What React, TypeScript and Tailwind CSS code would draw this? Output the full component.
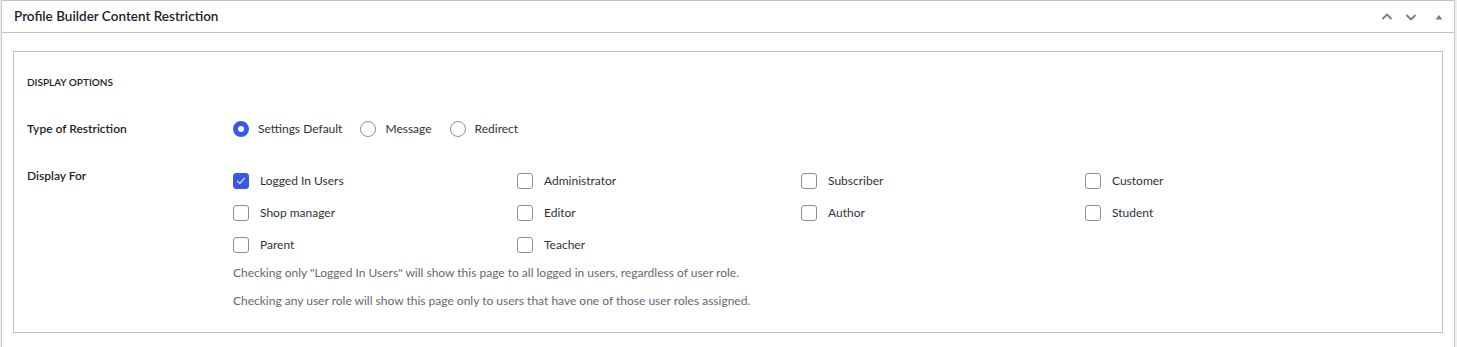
const roles: { name: string; checked?: boolean }[] = [
  { name: "Logged In Users", checked: true },
  { name: "Administrator" },
  { name: "Subscriber" },
  { name: "Customer" },
  { name: "Shop manager" },
  { name: "Editor" },
  { name: "Author" },
  { name: "Student" },
  { name: "Parent" },
  { name: "Teacher" },
];

const radios = [
  { name: "Settings Default", checked: true },
  { name: "Message" },
  { name: "Redirect" },
];

function Checkbox({ checked }: { checked?: boolean }) {
  if (checked) {
    return (
      <span className="w-4 h-4 rounded-[3px] bg-[#3858e9] border border-[#3858e9] flex items-center justify-center shrink-0">
        <svg width="12" height="12" viewBox="0 0 12 12" fill="none">
          <path d="M2.5 6.3 L4.8 8.5 L9.3 3.2" stroke="#c9d2fb" strokeWidth="1.4" strokeLinecap="round" strokeLinejoin="round" />
        </svg>
      </span>
    );
  }
  return <span className="w-4 h-4 rounded-[3px] border border-[#8c8f94] bg-white shrink-0" />;
}

function Radio({ checked }: { checked?: boolean }) {
  if (checked) {
    return <span className="w-4 h-4 rounded-full border-[5px] border-[#3858e9] bg-white shrink-0" />;
  }
  return <span className="w-4 h-4 rounded-full border border-[#8c8f94] bg-white shrink-0" />;
}

export default function App() {
  return (
    <div className="bg-[#f0f0f1] min-h-[347px] pl-px font-['Lato','Noto_Sans',sans-serif] text-[#2c3338]">
      <div className="w-[1454px] bg-white border border-b-0 border-[#c3c4c7] min-h-[347px]">
        <div className="h-[32px] flex items-center justify-between border-b border-[#c3c4c7] pl-3 pr-[9px]">
          <div className="text-[13.5px] font-semibold text-[#1d2327]">Profile Builder Content Restriction</div>
          <div className="flex items-center gap-[12px] text-[#787c82]">
            <svg width="12" height="12" viewBox="0 0 12 12" fill="none">
              <path d="M1.5 8 L6 3.5 L10.5 8" stroke="#787c82" strokeWidth="1.8" />
            </svg>
            <svg width="12" height="12" viewBox="0 0 12 12" fill="none">
              <path d="M1.5 4 L6 8.5 L10.5 4" stroke="#787c82" strokeWidth="1.8" />
            </svg>
            <svg width="12" height="12" viewBox="0 0 12 12" className="ml-[4px]">
              <path d="M2.5 8.5 L6 4 L9.5 8.5 Z" fill="#787c82" />
            </svg>
          </div>
        </div>
        <div className="pt-[18px] px-[11px] pb-[14px]">
          <div className="border border-[#c3c4c7] pl-[13px] pt-[20px] pb-[21px]">
            <div className="h-[20px] flex items-center text-[10px] font-semibold uppercase text-[#1d2327]">
              Display Options
            </div>
            <div className="mt-[27px] flex items-center h-[20px]">
              <div className="w-[206px] text-[12px] font-semibold text-[#1d2327]">Type of Restriction</div>
              <div className="flex items-center text-[12px]">
                {radios.map((r) => (
                  <label key={r.name} className="flex items-center gap-[9px] mr-[18px]">
                    <Radio checked={r.checked} />
                    <span>{r.name}</span>
                  </label>
                ))}
              </div>
            </div>
            <div className="mt-[27px] flex">
              <div className="w-[206px] h-[20px] flex items-center text-[12px] font-semibold text-[#1d2327]">Display For</div>
              <div>
                <div className="grid grid-cols-[284px_284px_284px_284px] gap-y-[2px]">
                  {roles.map((r) => (
                    <label key={r.name} className="h-[30px] flex items-center gap-[11px] text-[12px]">
                      <Checkbox checked={r.checked} />
                      <span>{r.name}</span>
                    </label>
                  ))}
                </div>
                <div className="mt-[3px] h-[20px] flex items-center text-[12px] text-[#646970]">
                  Checking only "Logged In Users" will show this page to all logged in users, regardless of user role.
                </div>
                <div className="mt-[8px] h-[20px] flex items-center text-[12px] text-[#646970]">
                  Checking any user role will show this page only to users that have one of those user roles assigned.
                </div>
              </div>
            </div>
          </div>
        </div>
      </div>
    </div>
  );
}
